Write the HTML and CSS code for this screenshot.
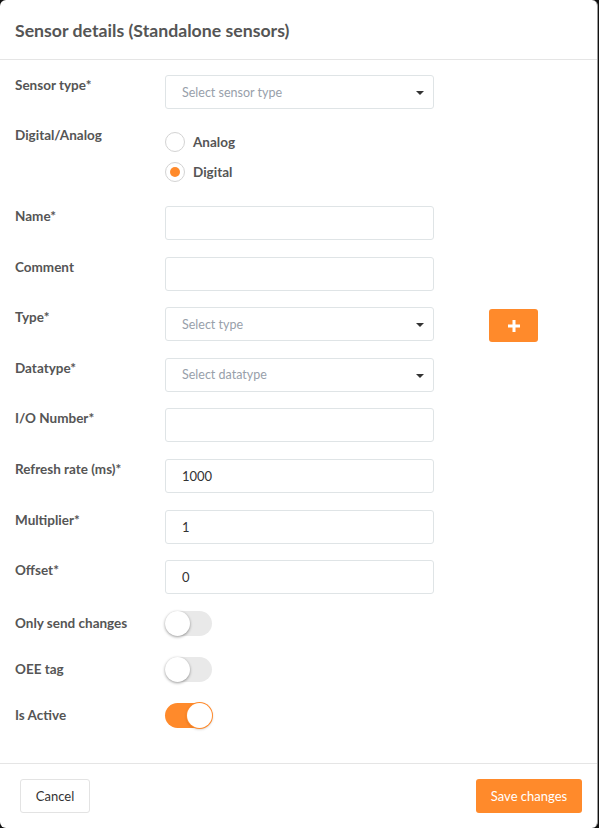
FILE: index.html
```html
<!DOCTYPE html>
<html>
<head>
<meta charset="utf-8">
<link rel="stylesheet" href="styles.css">
</head>
<body>
<div class="modal">
  <div class="modal-header"><h4 class="title">Sensor details (Standalone sensors)</h4></div>
  <div class="modal-body">
    <div class="row">
      <label class="lbl">Sensor type*</label>
      <div class="select"><span class="ph">Select sensor type</span><span class="caret"></span></div>
    </div>
    <div class="row radio-row">
      <label class="lbl">Digital/Analog</label>
      <div class="radios">
        <div class="radio"><span class="circle"></span><span class="rtext">Analog</span></div>
        <div class="radio"><span class="circle checked"></span><span class="rtext">Digital</span></div>
      </div>
    </div>
    <div class="row">
      <label class="lbl">Name*</label>
      <div class="input"></div>
    </div>
    <div class="row">
      <label class="lbl">Comment</label>
      <div class="input"></div>
    </div>
    <div class="row">
      <label class="lbl">Type*</label>
      <div class="select"><span class="ph">Select type</span><span class="caret"></span></div>
      <button class="add-btn"><svg width="12" height="12" viewBox="0 0 12 12"><path d="M4.5 0h3v4.5H12v3H7.5V12h-3V7.5H0v-3h4.5z" fill="#fff"/></svg></button>
    </div>
    <div class="row">
      <label class="lbl">Datatype*</label>
      <div class="select"><span class="ph">Select datatype</span><span class="caret"></span></div>
    </div>
    <div class="row">
      <label class="lbl">I/O Number*</label>
      <div class="input"></div>
    </div>
    <div class="row">
      <label class="lbl">Refresh rate (ms)*</label>
      <div class="input"><span class="val">1000</span></div>
    </div>
    <div class="row">
      <label class="lbl">Multiplier*</label>
      <div class="input"><span class="val">1</span></div>
    </div>
    <div class="row">
      <label class="lbl">Offset*</label>
      <div class="input"><span class="val">0</span></div>
    </div>
    <div class="row toggle-row">
      <label class="lbl">Only send changes</label>
      <span class="toggle"><span class="knob"></span></span>
    </div>
    <div class="row toggle-row">
      <label class="lbl">OEE tag</label>
      <span class="toggle"><span class="knob"></span></span>
    </div>
    <div class="row toggle-row">
      <label class="lbl">Is Active</label>
      <span class="toggle on"><span class="knob"></span></span>
    </div>
  </div>
  <div class="modal-footer">
    <button class="btn cancel">Cancel</button>
    <button class="btn save">Save changes</button>
  </div>
</div>
</body>
</html>
```

FILE: styles.css
```css
* { box-sizing: border-box; }
html, body { margin: 0; padding: 0; }
body {
  background: #111;
  font-family: "Lato", "Liberation Sans", sans-serif;
  width: 599px;
  height: 828px;
  overflow: hidden;
}
.modal {
  width: 598px;
  height: 828px;
  background: #fff;
  border-radius: 6px;
  border-right: 1px solid #999;
  display: flex;
  flex-direction: column;
}
.modal-header {
  height: 60px;
  padding: 0 15px;
  border-bottom: 1px solid #e5e5e5;
  display: flex;
  align-items: center;
}
.title {
  margin: 0;
  font-size: 17.7px;
  font-weight: 700;
  color: #555;
  padding-top: 1px;
}
.modal-body {
  padding: 15px 15px 0 15px;
  flex: 1;
}
.row {
  display: flex;
  align-items: flex-start;
  margin-bottom: 16.6px;
}
.row:first-child { margin-bottom: 16px; }
.lbl {
  width: 150px;
  flex: none;
  font-size: 13.5px;
  font-weight: 700;
  color: #555;
  line-height: 20px;
}
.input, .select {
  width: 269px;
  height: 34px;
  border: 1px solid #dfe4e6;
  border-radius: 3px;
  display: flex;
  align-items: center;
  padding: 0 15px 0 16px;
  position: relative;
}
.ph {
  font-size: 12.5px;
  color: #98a0aa;
}
.val {
  font-size: 13px;
  color: #333;
}
.caret {
  position: absolute;
  right: 9px;
  top: 15px;
  width: 0;
  height: 0;
  border-left: 4px solid transparent;
  border-right: 4px solid transparent;
  border-top: 4px solid #333;
}
.add-btn {
  margin-left: 55px;
  margin-top: 2px;
  margin-bottom: -1px;
  width: 49px;
  height: 33px;
  border: none;
  border-radius: 3px;
  background: #ff8a2b;
  display: flex;
  align-items: center;
  justify-content: center;
  padding: 0;
}
.radio-row { margin-bottom: 19px; }
.radios {
  padding-top: 2px;
  display: flex;
  flex-direction: column;
}
.radio {
  height: 30px;
  display: flex;
  align-items: center;
}
.circle {
  width: 20px;
  height: 20px;
  border: 1px solid #d3d3d3;
  border-radius: 50%;
  display: flex;
  align-items: center;
  justify-content: center;
  margin-right: 8px;
}
.circle.checked::after {
  content: "";
  width: 10px;
  height: 10px;
  border-radius: 50%;
  background: #ff8a2b;
}
.rtext {
  font-size: 13.5px;
  font-weight: 700;
  color: #555;
}
.toggle-row {
  height: 25px;
  align-items: center;
  margin-bottom: 21px;
}
.toggle {
  width: 47px;
  height: 25px;
  border-radius: 13px;
  background: #e9e9e9;
  position: relative;
  display: block;
}
.knob {
  position: absolute;
  left: 0;
  top: 0;
  width: 25px;
  height: 25px;
  border-radius: 50%;
  background: #fff;
  box-shadow: 0 1px 3px rgba(0,0,0,0.4);
}
.toggle.on { background: #ff8a2b; }
.toggle.on .knob { left: 22px; box-shadow: 0 0 0 1px #ff8a2b, 0 1px 3px rgba(0,0,0,0.3); }
.modal-footer {
  height: 65px;
  border-top: 1px solid #e5e5e5;
  padding: 15px 15px 0 20px;
  display: flex;
  justify-content: space-between;
  align-items: flex-start;
}
.btn {
  height: 34px;
  border-radius: 3px;
  font-family: "Lato", "Liberation Sans", sans-serif;
  font-size: 13px;
  padding: 0;
}
.cancel {
  width: 70px;
  background: #fff;
  border: 1px solid #e3e3e3;
  color: #333;
}
.save {
  width: 106px;
  background: #ff8a2b;
  border: none;
  color: #fff;
}
```
